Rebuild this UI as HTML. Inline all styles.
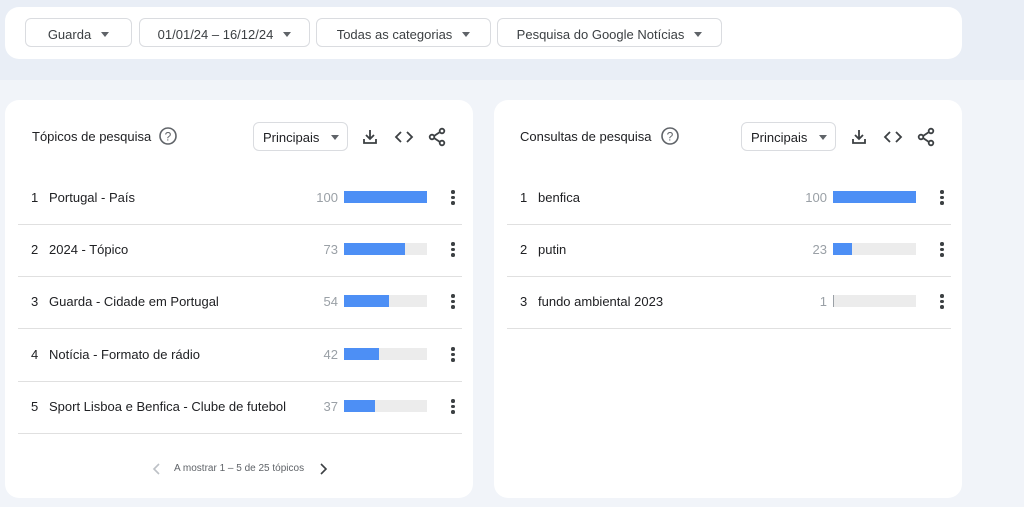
<html><head><style>
body{margin:0;width:1024px;height:507px;background:#f1f4f9;font-family:"Liberation Sans",sans-serif;position:relative;overflow:hidden;color:#202124}
.band{position:absolute;left:0;top:0;width:1024px;height:80px;background:#e9eef6}
.card{position:absolute;background:#fff;border-radius:14px}
.btn{position:absolute;top:18px;height:29px;border:1px solid #dadce0;border-radius:6px;font-size:13px;line-height:31px;text-align:center;color:#3c4043;box-sizing:border-box}
.tri{display:inline-block;width:0;height:0;border-left:4px solid transparent;border-right:4px solid transparent;border-top:5px solid #5f6368;margin-left:10px;vertical-align:2px}
.t{position:absolute;font-size:13px}
.row{position:absolute;left:13px;width:444px;height:52px;border-bottom:1px solid #e0e0e0}
.row .n{position:absolute;left:13px;top:18px;font-size:13px}
.row .l{position:absolute;left:31px;top:18px;font-size:13px}
.row .v{position:absolute;right:124px;top:18px;font-size:13px;color:#9aa0a6}
.row .bg{position:absolute;left:326px;top:19px;width:83px;height:12px;background:#ececec}
.row .fg{position:absolute;left:0;top:0;height:12px;background:#4d8ff5}
.dots{position:absolute;left:433px;top:18px;width:4px}
.dots i{display:block;width:3.5px;height:3.5px;border-radius:50%;background:#3c4043;margin-bottom:2px}
.sel{position:absolute;top:22px;height:29px;border:1px solid #dadce0;border-radius:6px;font-size:13px;line-height:29px;padding:0 0 0 9px;box-sizing:border-box;width:95px}
</style></head><body>
<div class="band"></div>
<div class="card" style="left:5px;top:7px;width:957px;height:52px"></div>
<div class="btn" style="left:25px;width:107px">Guarda<span class="tri"></span></div>
<div class="btn" style="left:139px;width:171px">01/01/24 – 16/12/24<span class="tri"></span></div>
<div class="btn" style="left:316px;width:175px">Todas as categorias<span class="tri"></span></div>
<div class="btn" style="left:497px;width:225px">Pesquisa do Google Notícias<span class="tri"></span></div>

<div class="card" style="left:5px;top:100px;width:468px;height:398px">
 <div class="t" style="left:27px;top:29px">Tópicos de pesquisa</div>
 <svg style="position:absolute;left:153px;top:26px" width="20" height="20" viewBox="0 0 20 20"><circle cx="10" cy="10" r="8" fill="none" stroke="#5f6368" stroke-width="1.6"/><text x="10" y="14.5" font-size="12" text-anchor="middle" fill="#5f6368" font-family="Liberation Sans">?</text></svg>
 <div class="sel" style="left:248px">Principais<span class="tri" style="margin-left:12px"></span></div>
 <svg style="position:absolute;left:356px;top:28px" width="18" height="18" viewBox="0 0 18 18" fill="none" stroke="#3c4043" stroke-width="1.8"><path d="M9 2v9M5 7l4 4 4-4M3 11v4h12v-4"/></svg>
 <svg style="position:absolute;left:389px;top:28px" width="20" height="18" viewBox="0 0 20 18" fill="none" stroke="#3c4043" stroke-width="1.8"><path d="M7 4l-5 5 5 5M13 4l5 5-5 5"/></svg>
 <svg style="position:absolute;left:423px;top:27px" width="18" height="20" viewBox="0 0 18 20" fill="none" stroke="#3c4043" stroke-width="1.8"><circle cx="14" cy="4" r="2.3"/><circle cx="4" cy="10" r="2.3"/><circle cx="14" cy="16" r="2.3"/><path d="M6 9l6-4M6 11l6 4"/></svg>
 <div class="row" style="top:72px"><span class="n">1</span><span class="l">Portugal - País</span><span class="v">100</span><div class="bg"><div class="fg" style="width:83px"></div></div><div class="dots"><i></i><i></i><i></i></div></div>
 <div class="row" style="top:124px"><span class="n">2</span><span class="l">2024 - Tópico</span><span class="v">73</span><div class="bg"><div class="fg" style="width:61px"></div></div><div class="dots"><i></i><i></i><i></i></div></div>
 <div class="row" style="top:176px"><span class="n">3</span><span class="l">Guarda - Cidade em Portugal</span><span class="v">54</span><div class="bg"><div class="fg" style="width:45px"></div></div><div class="dots"><i></i><i></i><i></i></div></div>
 <div class="row" style="top:229px"><span class="n">4</span><span class="l">Notícia - Formato de rádio</span><span class="v">42</span><div class="bg"><div class="fg" style="width:35px"></div></div><div class="dots"><i></i><i></i><i></i></div></div>
 <div class="row" style="top:281px"><span class="n">5</span><span class="l">Sport Lisboa e Benfica - Clube de futebol</span><span class="v">37</span><div class="bg"><div class="fg" style="width:31px"></div></div><div class="dots"><i></i><i></i><i></i></div></div>
 <svg style="position:absolute;left:147px;top:363px" width="10" height="12" viewBox="0 0 10 12" fill="none" stroke="#bdc1c6" stroke-width="1.6"><path d="M7 1L2 6l5 5"/></svg>
 <div style="position:absolute;left:169px;top:363px;font-size:10px;color:#5f6368">A mostrar 1 – 5 de 25 tópicos</div>
 <svg style="position:absolute;left:313px;top:363px" width="10" height="12" viewBox="0 0 10 12" fill="none" stroke="#3c4043" stroke-width="1.6"><path d="M3 1l5 5-5 5"/></svg>
</div>

<div class="card" style="left:494px;top:100px;width:468px;height:398px">
 <div class="t" style="left:26px;top:29px">Consultas de pesquisa</div>
 <svg style="position:absolute;left:166px;top:26px" width="20" height="20" viewBox="0 0 20 20"><circle cx="10" cy="10" r="8" fill="none" stroke="#5f6368" stroke-width="1.6"/><text x="10" y="14.5" font-size="12" text-anchor="middle" fill="#5f6368" font-family="Liberation Sans">?</text></svg>
 <div class="sel" style="left:247px">Principais<span class="tri" style="margin-left:12px"></span></div>
 <svg style="position:absolute;left:356px;top:28px" width="18" height="18" viewBox="0 0 18 18" fill="none" stroke="#3c4043" stroke-width="1.8"><path d="M9 2v9M5 7l4 4 4-4M3 11v4h12v-4"/></svg>
 <svg style="position:absolute;left:389px;top:28px" width="20" height="18" viewBox="0 0 20 18" fill="none" stroke="#3c4043" stroke-width="1.8"><path d="M7 4l-5 5 5 5M13 4l5 5-5 5"/></svg>
 <svg style="position:absolute;left:423px;top:27px" width="18" height="20" viewBox="0 0 18 20" fill="none" stroke="#3c4043" stroke-width="1.8"><circle cx="14" cy="4" r="2.3"/><circle cx="4" cy="10" r="2.3"/><circle cx="14" cy="16" r="2.3"/><path d="M6 9l6-4M6 11l6 4"/></svg>
 <div class="row" style="top:72px"><span class="n">1</span><span class="l">benfica</span><span class="v">100</span><div class="bg"><div class="fg" style="width:83px"></div></div><div class="dots"><i></i><i></i><i></i></div></div>
 <div class="row" style="top:124px"><span class="n">2</span><span class="l">putin</span><span class="v">23</span><div class="bg"><div class="fg" style="width:19px"></div></div><div class="dots"><i></i><i></i><i></i></div></div>
 <div class="row" style="top:176px"><span class="n">3</span><span class="l">fundo ambiental 2023</span><span class="v">1</span><div class="bg"><div class="fg" style="width:1px;background:#9aa0a6"></div></div><div class="dots"><i></i><i></i><i></i></div></div>
</div>
</body></html>
